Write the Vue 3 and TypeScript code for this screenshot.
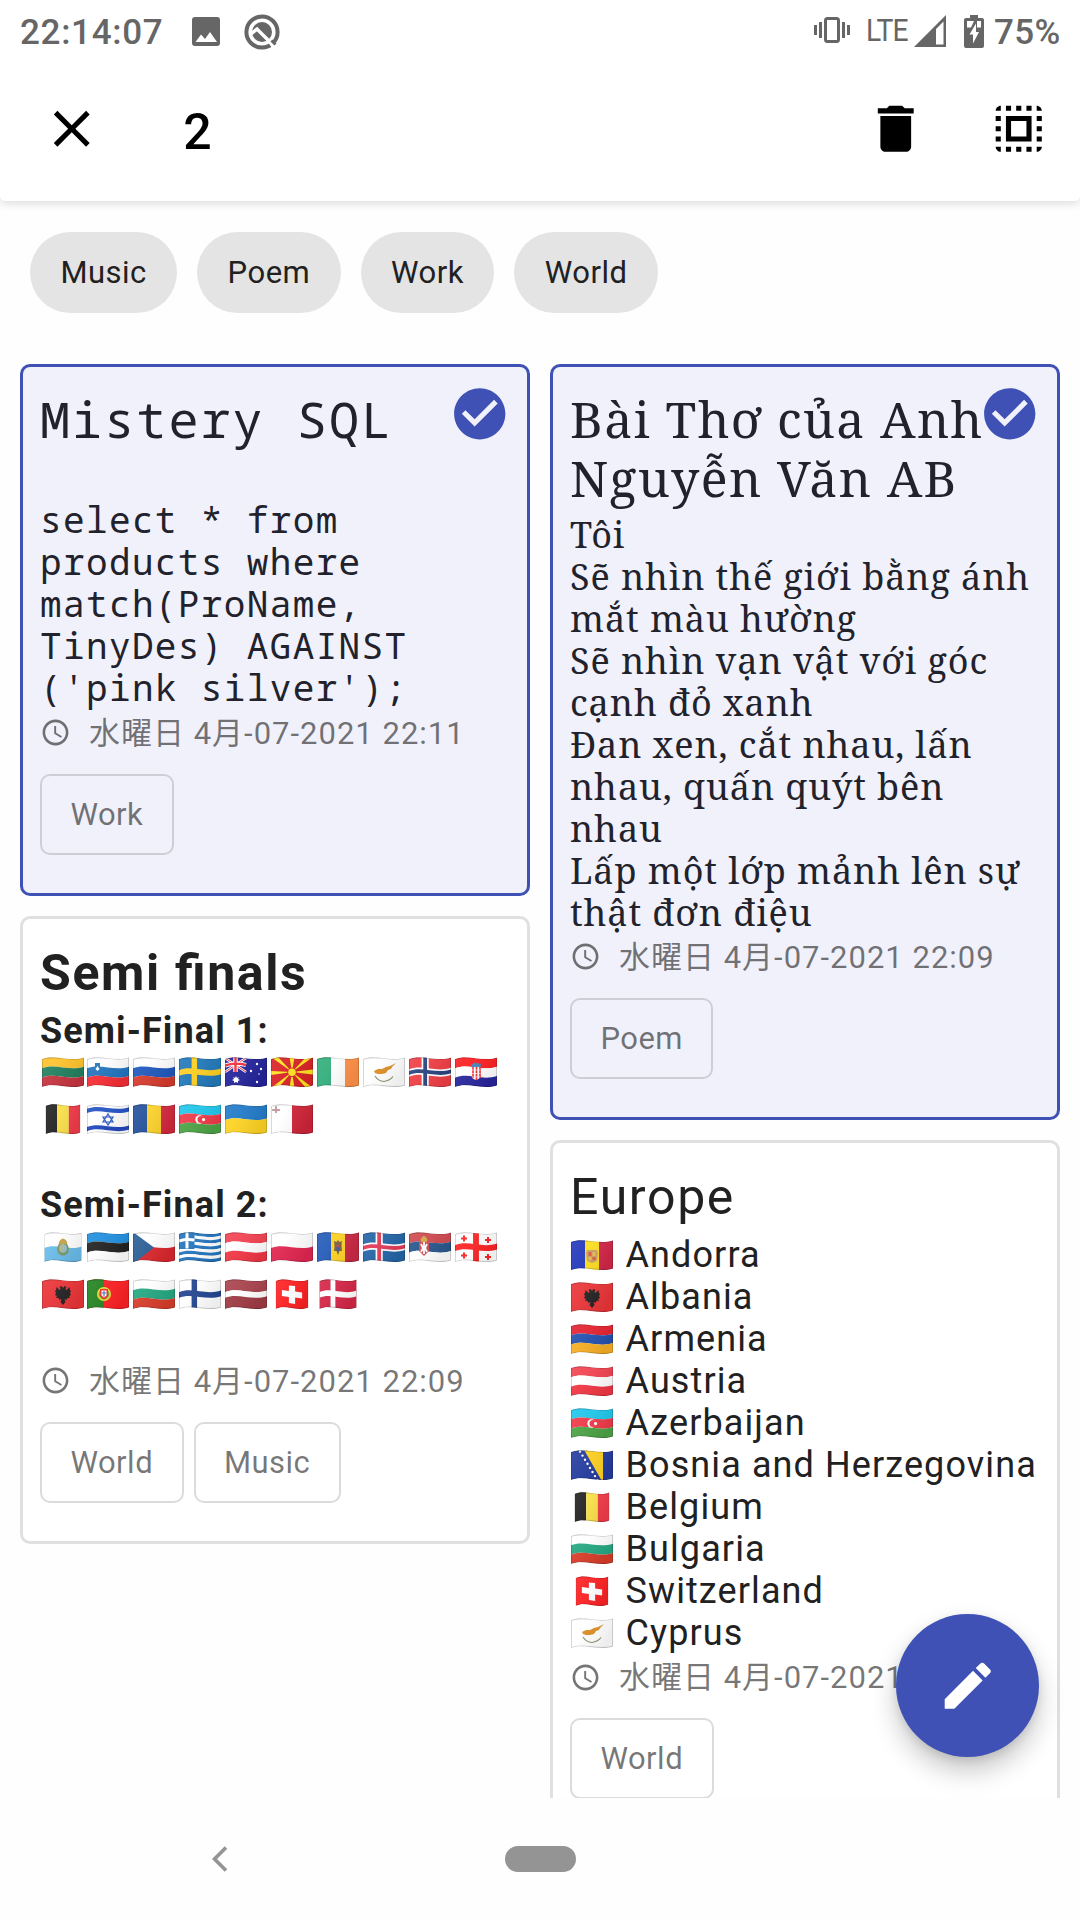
<script setup lang="ts">
interface Shape {
  d: string
  fill?: string
  stroke?: string
  width?: number
}
interface Flag {
  scale?: number
  shapes: Shape[]
}

const W = 42
const H = 28

const fwd = (y: number) => `M0 ${y + 2} C13 ${y - 3.5} 27 ${y + 5.5} ${W} ${y + 0.4}`
const back = (y: number) => `L${W} ${y + 0.4} C27 ${y + 5.5} 13 ${y - 3.5} 0 ${y + 2}Z`

/* horizontal stripe following the wave, given as fractions of the height */
const band = (a: number, b: number, fill: string): Shape => ({ d: fwd(a * H) + back(b * H), fill })
/* vertical stripe, given as fractions of the width */
const pole = (a: number, b: number, fill: string): Shape => ({ d: `M${a * W} -3H${b * W}V36H${a * W}Z`, fill })
const shape = (d: string, fill: string): Shape => ({ d, fill })
const line = (d: string, stroke: string, width: number): Shape => ({ d, stroke, width })
const disc = (x: number, y: number, r: number, fill: string): Shape =>
  shape(`M${x - r} ${y}a${r} ${r} 0 1 0 ${2 * r} 0a${r} ${r} 0 1 0 ${-2 * r} 0Z`, fill)

const rows = (...c: string[]): Shape[] => c.map((f, i) => band(i / c.length, (i + 1) / c.length, f))
const cols = (...c: string[]): Shape[] => c.map((f, i) => pole(i / c.length, (i + 1) / c.length, f))
const nordic = (bg: string, outer: string, inner?: string): Shape[] => {
  const s = [band(0, 1, bg), pole(0.3, inner ? 0.47 : 0.43, outer), band(inner ? 0.37 : 0.4, inner ? 0.63 : 0.6, outer)]
  if (inner) s.push(pole(0.34, 0.43, inner), band(0.43, 0.57, inner))
  return s
}

const outline = fwd(0) + back(H)
const eagle = 'M21 9l1.500-2 2 1-1 2 1 1 3-3 .500 3 1 1-1 2 1 2-2 1 1 2-2.500 0-1 2-2-1 1 3-2.500 3-2.500-3 1-3-2 1-1-2-2.500 0 1-2-2-1 1-2-1-2 1-1 .500-3 3 3 1-1-1-2 2-1Z'

const flags: Record<string, Flag> = {
  lt: { shapes: rows('#fec22d', '#23805f', '#c5343f') },
  si: { shapes: [...rows('#ffffff', '#2374bd', '#f52d35'), shape('M8 6h5v5q0 3-2.500 4q-2.500-1-2.500-4Z', '#2775b6'), shape('M8.500 12l2-3 2 3-2 2Z', '#ffffff')] },
  ru: { shapes: rows('#ffffff', '#2058bd', '#d53b2d') },
  se: { shapes: nordic('#2279b9', '#fecf23') },
  au: {
    shapes: [
      band(0, 1, '#25249b'),
      line('M0 1L21 15M0 15L21 1', '#ffffff', 2.6),
      line('M0 1L21 15M0 15L21 1', '#ee2d3b', 1),
      line('M0 8.500Q10 5 21 8M10.500 0V15', '#ffffff', 4.4),
      line('M0 8.500Q10 5 21 8M10.500 0V15', '#ee2d3b', 2.4),
      shape('M11 19l1 2 2-1-1 2 2 1-2 1 0 2-2-1-2 1 0-2-2-1 2-1-1-2 2 1Z', '#ffffff'),
      disc(32, 7, 1.2, '#ffffff'), disc(26, 14, 1.2, '#ffffff'), disc(36, 12, 1.2, '#ffffff'), disc(32, 25, 1.2, '#ffffff'), disc(34, 17, 0.8, '#ffffff')
    ]
  },
  mk: {
    shapes: [
      band(0, 1, '#d92327'),
      shape('M21 15L0 0h7ZM21 15L42 0h-7ZM21 15L0 31h7ZM21 15L42 31h-7ZM21 15L18.500 0h5ZM21 15L18.500 31h5ZM21 15L0 14v4ZM21 15L42 12.500v5Z', '#fee523'),
      disc(21, 15.3, 4.6, '#d92327'), disc(21, 15.3, 3.8, '#fee523')
    ]
  },
  ie: { shapes: cols('#32ae7b', '#ffffff', '#ff9148') },
  cy: {
    shapes: [
      band(0, 1, '#ffffff'),
      shape('M11 14l4-2 4 0 4-2 4-1 6-3-4 4-1 2-3 1-2 3-4 1-4 0-3-1Z', '#dc8e24'),
      line('M12 19q3 5 9 5.500q6-1 9-5', '#8c9370', 1.2)
    ]
  },
  no: { shapes: nordic('#ef3f45', '#ffffff', '#2a437f') },
  hr: {
    shapes: [
      ...rows('#fc2023', '#ffffff', '#28259c'),
      shape('M16.500 10h9v8q0 4-4.500 5q-4.500-1-4.500-5Z', '#ffffff'),
      line('M18 10v11M21.500 10v13M25 10v11', '#f43238', 1.7),
      line('M16.500 13h9M16.500 16.500h9M17 20h8', '#ffffff', 0.6),
      shape('M16 6.500l2 1 1-2 2 1 2-1 1 2 2-1-.500 3.500h-9Z', '#4187bd')
    ]
  },
  be: { scale: 0.83, shapes: cols('#232323', '#fae04a', '#f13c49') },
  il: {
    shapes: [
      band(0, 1, '#ffffff'), band(0.1, 0.25, '#2453c3'), band(0.75, 0.9, '#2247be'),
      line('M21 10L26 18H16ZM21 21L16 13H26Z', '#2858c4', 1.2)
    ]
  },
  ro: { shapes: cols('#25519c', '#fcd22d', '#d3293d') },
  az: {
    shapes: [...rows('#20c6ea', '#ef3a49', '#4da246'), disc(20.5, 15.5, 4.2, '#ffffff'), disc(22, 15.5, 3.5, '#ef3a49'), disc(24.6, 15.6, 1.7, '#ffffff')]
  },
  ua: { shapes: rows('#227bc8', '#fed324') },
  mt: { shapes: [band(0, 1, '#ffffff'), pole(0.5, 1, '#ce2438'), line('M5 2v7M1 6h8', '#b5a3a7', 2), line('M5 3v5M2 6h6', '#d5808a', 0.7)] },
  sm: {
    scale: 0.89,
    shapes: [
      ...rows('#ffffff', '#69bbe8'),
      disc(21, 17, 6.6, '#7c9860'), disc(21, 16.5, 4.6, '#7fb6cf'),
      shape('M17 9q4-5 8 0l1 3H16Z', '#c8a448'),
      line('M18.500 13v6M21 12v8M23.500 13v6', '#d8c27a', 1)
    ]
  },
  ee: { shapes: rows('#218fde', '#222222', '#ffffff') },
  cz: { shapes: [...rows('#ffffff', '#d9272d'), shape('M0 0L21 15.500 0 32Z', '#2c5f96')] },
  gr: {
    shapes: [
      ...Array.from({ length: 9 }, (_, i) => band(i / 9, (i + 1) / 9, i % 2 ? '#ffffff' : '#2475bd')),
      shape('M0 0H15.500V17H0Z', '#2475bd'),
      line('M0 9Q8 6.500 15.500 8M8 0V16.500', '#ffffff', 3)
    ]
  },
  at: { shapes: rows('#f24351', '#ffffff', '#f03644') },
  pl: { shapes: rows('#ffffff', '#e02650') },
  md: {
    shapes: [...cols('#245cb8', '#fdd226', '#cc2945'), shape('M21 8l1.500 2 2.500-1-.500 5 .500 5-2.500 0-1.500 4-1.500-4-2.500 0 .500-5-.500-5 2.500 1Z', '#7c6541'), shape('M19.500 13h3v5l-1.500 2-1.500-2Z', '#425ba6'), shape('M19.500 13h3v2h-3Z', '#d94337')]
  },
  is: { shapes: nordic('#2465a6', '#ffffff', '#e33a58') },
  rs: {
    shapes: [
      ...rows('#cf4b51', '#2a568d', '#ffffff'),
      shape('M10 10l5-2 5 2v9l-5 5-5-5Z', '#ce4b50'),
      line('M15 10v12M12 12l2 4-2 4M18 12l-2 4 2 4', '#ffffff', 1.8),
      shape('M11.500 8q3.500-8 7 0l-1 2h-5Z', '#d2a845')
    ]
  },
  ge: {
    shapes: [
      band(0, 1, '#ffffff'), band(0.4, 0.61, '#fb2425'), pole(0.43, 0.57, '#fb2425'),
      line('M9 3.500v6M6 6.500h6M33 5v6M30 8h6M9 20.500v6M6 23.500h6M33 22v6M30 25h6', '#fb2425', 2)
    ]
  },
  al: { shapes: [band(0, 1, '#e93438'), shape(eagle, '#222222')] },
  pt: {
    shapes: [
      band(0, 1, '#fc2023'), pole(0, 0.4, '#238320'), disc(17, 15, 7, '#e8df38'), disc(17, 15, 5.4, '#8b9a2e'),
      shape('M13 10h8v7l-4 3.500-4-3.500Z', '#ef2e2c'), shape('M14.500 11.500h5v5l-2.500 2-2.500-2Z', '#ffffff'), line('M17 12v5.500M15 14h4', '#3d6abc', 1.1)
    ]
  },
  bg: { shapes: rows('#ffffff', '#25a781', '#d73c29') },
  fi: { shapes: nordic('#ffffff', '#23468f') },
  lv: { shapes: [band(0, 0.4, '#a8434d'), band(0.4, 0.6, '#ffffff'), band(0.6, 1, '#9e3a43')] },
  ch: { scale: 0.78, shapes: [band(0, 1, '#fd2123'), shape('M17 6.500l8 .500v5.500l9 1v6l-9-1v6.500l-8-1v-6l-9-1v-6l9 1Z', '#ffffff')] },
  dk: { scale: 0.89, shapes: nordic('#d32646', '#ffffff') },
  ad: {
    shapes: [...cols('#2439bc', '#fedf22', '#d32748'), shape('M16 10h10l1 3-1 8-5 2-5-2-1-8Z', '#c8a26b'), shape('M17.500 12h3v4h-3ZM21.500 17h3v3h-3Z', '#e35b35'), shape('M21.500 12h3v4h-3ZM17.500 17h3v3h-3Z', '#f1b94b')]
  },
  am: { shapes: rows('#e42230', '#2451ae', '#f6ae24') },
  ba: {
    shapes: [band(0, 1, '#243c9e'), shape('M12 -2H32V33Z', '#fdd023'), ...Array.from({ length: 8 }, (_, i) => disc(9 + i * 2.5, 1.5 + i * 4.1, 1.2, '#ffffff'))]
  }
}

type Tone = 'sans' | 'mono' | 'serif' | 'bold'
interface Block {
  kind: 'text' | 'flags' | 'country' | 'gap'
  text?: string
  codes?: string[]
  code?: string
}
interface Note {
  title: string[]
  tone: Tone
  selected: boolean
  date: string
  tags: string[]
  blocks: Block[]
}

const text = (t: string): Block => ({ kind: 'text', text: t })
const strip = (s: string): Block => ({ kind: 'flags', codes: s.split(' ') })
const country = (code: string, t: string): Block => ({ kind: 'country', code, text: t })

const columns: Note[][] = [
  [
    {
      title: ['Mistery SQL'], tone: 'mono', selected: true, date: '22:11', tags: ['Work'],
      blocks: ['select * from', 'products where', 'match(ProName,', 'TinyDes) AGAINST', "('pink silver');"].map(text)
    },
    {
      title: ['Semi finals'], tone: 'bold', selected: false, date: '22:09', tags: ['World', 'Music'],
      blocks: [
        text('Semi-Final 1:'),
        strip('lt si ru se au mk ie cy no hr'),
        strip('be il ro az ua mt'),
        { kind: 'gap' },
        text('Semi-Final 2:'),
        strip('sm ee cz gr at pl md is rs ge'),
        strip('al pt bg fi lv ch dk'),
        { kind: 'gap' }
      ]
    }
  ],
  [
    {
      title: ['Bài Thơ của Anh', 'Nguyễn Văn AB'], tone: 'serif', selected: true, date: '22:09', tags: ['Poem'],
      blocks: ['Tôi', 'Sẽ nhìn thế giới bằng ánh', 'mắt màu hường', 'Sẽ nhìn vạn vật với góc', 'cạnh đỏ xanh', 'Đan xen, cắt nhau, lấn', 'nhau, quấn quýt bên', 'nhau', 'Lấp một lớp mảnh lên sự', 'thật đơn điệu'].map(text)
    },
    {
      title: ['Europe'], tone: 'sans', selected: false, date: '22:09', tags: ['World'],
      blocks: [
        country('ad', 'Andorra'), country('al', 'Albania'), country('am', 'Armenia'), country('at', 'Austria'), country('az', 'Azerbaijan'),
        country('ba', 'Bosnia and Herzegovina'), country('be', 'Belgium'), country('bg', 'Bulgaria'), country('ch', 'Switzerland'), country('cy', 'Cyprus')
      ]
    }
  ]
]

const filters = ['Music', 'Poem', 'Work', 'World']

const fit = (f: Flag) => (f.scale ? `translate(${(W * (1 - f.scale)) / 2} 0) scale(${f.scale} 1)` : undefined)
const codesOf = (b: Block) => b.codes ?? (b.code ? [b.code] : [])
</script>

<template>
  <div class="screen">
    <svg class="defs" aria-hidden="true">
      <defs>
        <clipPath id="wave"><path :d="outline" /></clipPath>
        <linearGradient id="shade" x1="0" y1="0" x2="1" y2="0.4">
          <stop offset="0" stop-color="#fff" stop-opacity="0.1" />
          <stop offset="0.35" stop-color="#fff" stop-opacity="0.06" />
          <stop offset="1" stop-color="#000" stop-opacity="0.07" />
        </linearGradient>
      </defs>
    </svg>

    <header class="top">
      <div class="status">
        <span class="clock">22:14:07</span>
        <svg class="s-image" viewBox="0 0 28 29"><path fill-rule="evenodd" d="M3 0h22a3 3 0 0 1 3 3v23a3 3 0 0 1-3 3H3a3 3 0 0 1-3-3V3a3 3 0 0 1 3-3ZM3.500 25h21.500l-7-10-5 7-4-4.500Z" /></svg>
        <svg class="s-q" viewBox="0 0 36 36">
          <circle cx="18" cy="18" r="15.600" fill="none" stroke="currentColor" stroke-width="4" />
          <circle cx="18" cy="18" r="10" />
          <path d="M7 20L13 15 30 32" fill="none" stroke="#fff" stroke-width="3.400" />
          <path d="M26 31l5-3 4 5-5 3Z" fill="#fff" />
          <path d="M27.500 26.500l4 4" stroke="currentColor" stroke-width="3" />
          <path d="M25 28l5 6" stroke="#fff" stroke-width="2" />
        </svg>
        <span class="grow"></span>
        <svg class="s-vib" viewBox="0 0 36 26"><path d="M0 8h3v10H0ZM5 5h3v16H5ZM28 5h3v16h-3ZM33 8h3v10h-3Z" /><rect x="11.500" y="1.500" width="13" height="23" rx="2" fill="none" stroke="currentColor" stroke-width="3" /></svg>
        <span class="lte">LTE</span>
        <svg class="s-sig" viewBox="0 0 32 32"><path fill-rule="evenodd" d="M32 0V32H0ZM29.500 6.500L22 14V29.500h7.500Z" /></svg>
        <svg class="s-bat" viewBox="0 0 20 33"><path fill-rule="evenodd" d="M6 0h8v3h4a2 2 0 0 1 2 2v26a2 2 0 0 1-2 2H2a2 2 0 0 1-2-2V5a2 2 0 0 1 2-2h4ZM3 6v6.500h4l3-6.500ZM13 6v6.500h4V6ZM12 8.500L5.500 19.500H9v9L15 17h-3Z" /></svg>
        <span class="pct">75%</span>
      </div>
      <div class="toolbar">
        <svg class="ico" viewBox="0 0 24 24"><path d="M19 6.410L17.590 5 12 10.590 6.410 5 5 6.410 10.590 12 5 17.590 6.410 19 12 13.410 17.590 19 19 17.590 13.410 12z" /></svg>
        <span class="count">2</span>
        <span class="grow"></span>
        <svg class="ico" viewBox="0 0 24 24"><path d="M6 19c0 1.100.9 2 2 2h8c1.100 0 2-.9 2-2V7H6v12zM19 4h-3.500l-1-1h-5l-1 1H5v2h14V4z" /></svg>
        <svg class="ico all" viewBox="0 0 24 24"><path d="M3 5h2V3c-1.100 0-2 .9-2 2zm0 8h2v-2H3v2zm4 8h2v-2H7v2zM3 9h2V7H3v2zm10-6h-2v2h2V3zm6 0v2h2c0-1.100-.9-2-2-2zM5 21v-2H3c0 1.100.9 2 2 2zm-2-4h2v-2H3v2zM9 3H7v2h2V3zm2 18h2v-2h-2v2zm8-8h2v-2h-2v2zm0 8c1.100 0 2-.9 2-2h-2v2zm0-12h2V7h-2v2zm0 8h2v-2h-2v2zm-4 4h2v-2h-2v2zm0-16h2V3h-2v2zM7 17h10V7H7v10zm2-8h6v6H9V9z" /></svg>
      </div>
    </header>

    <main class="content">
      <div class="filters">
        <span v-for="f in filters" :key="f" class="filter">{{ f }}</span>
      </div>
      <div class="board">
        <div v-for="(col, ci) in columns" :key="ci" class="col">
          <article v-for="note in col" :key="note.title[0]" class="card" :class="[note.tone, { selected: note.selected }]">
            <svg v-if="note.selected" class="check" viewBox="0 0 24 24"><path d="M12 2C6.480 2 2 6.480 2 12s4.480 10 10 10 10-4.480 10-10S17.520 2 12 2zm-2 15l-5-5 1.410-1.410L10 14.170l7.590-7.590L19 8l-9 9z" /></svg>
            <h2 class="title"><span v-for="t in note.title" :key="t">{{ t }}</span></h2>
            <div class="body">
              <div v-for="(b, bi) in note.blocks" :key="bi" class="row" :class="b.kind">
                <svg v-for="c in codesOf(b)" :key="c" class="flag" viewBox="0 0 42 31">
                  <g :transform="fit(flags[c])">
                    <g clip-path="url(#wave)">
                      <path v-for="(s, si) in flags[c].shapes" :key="si" :d="s.d" :fill="s.fill ?? 'none'" :stroke="s.stroke" :stroke-width="s.width" />
                      <path :d="outline" fill="url(#shade)" stroke="#000" stroke-opacity="0.2" stroke-width="1.600" />
                    </g>
                  </g>
                </svg>
                <span v-if="b.text">{{ b.text }}</span>
              </div>
            </div>
            <div class="date">
              <svg viewBox="0 0 24 24"><path d="M11.990 2C6.470 2 2 6.480 2 12s4.470 10 9.990 10C17.520 22 22 17.520 22 12S17.520 2 11.990 2zM12 20c-4.420 0-8-3.580-8-8s3.580-8 8-8 8 3.580 8 8-3.580 8-8 8zm.5-13H11v6l5.250 3.150.75-1.230-4.500-2.670z" /></svg>
              <span>水曜日 4月-07-2021 {{ note.date }}</span>
            </div>
            <div class="tags"><span v-for="t in note.tags" :key="t" class="tag">{{ t }}</span></div>
          </article>
        </div>
      </div>
    </main>

    <div class="fab">
      <svg class="ico" viewBox="0 0 24 24"><path d="M3 17.250V21h3.750L17.810 9.940l-3.750-3.750L3 17.250zM20.710 7.040c.39-.39.39-1.020 0-1.410l-2.340-2.340c-.39-.39-1.020-.39-1.410 0l-1.830 1.830 3.750 3.750 1.830-1.830z" /></svg>
    </div>

    <footer class="nav">
      <svg class="backbtn" viewBox="0 0 16 26"><path d="M14 1.500L2.500 13 14 24.500" fill="none" stroke="#949494" stroke-width="3.600" /></svg>
      <span class="pill"></span>
    </footer>
  </div>
</template>

<style>
body {
  margin: 0;
  background: #fff;
}
</style>

<style scoped>
.screen {
  position: relative;
  width: 1080px;
  height: 1920px;
  overflow: hidden;
  display: flex;
  flex-direction: column;
  background: #fefefe;
  color: #212121;
  font-family: Roboto, "Noto Sans CJK JP", sans-serif;
  font-size: 36px;
}
svg {
  display: block;
  flex: none;
  fill: currentColor;
}
.defs {
  position: absolute;
  width: 0;
  height: 0;
}
.grow {
  flex: 1;
}
.top {
  height: 201px;
  flex: none;
  background: #fff;
  border-radius: 0 0 5px 5px;
  box-shadow: 0 3px 9px rgba(0, 0, 0, 0.13);
  z-index: 1;
}
.status {
  box-sizing: border-box;
  height: 63px;
  padding: 0 20px;
  display: flex;
  align-items: center;
  color: #666;
  font-size: 35px;
  font-weight: 470;
}
.clock {
  width: 172px;
  flex: none;
  letter-spacing: 0.7px;
  line-height: 40px;
  padding-top: 3px;
}
.s-image {
  width: 28px;
  height: 29px;
}
.s-q {
  width: 36px;
  height: 36px;
  margin-left: 24px;
}
.s-vib {
  width: 36px;
  height: 26px;
  margin: 0 16px 3px 0;
}
.lte {
  flex: none;
  font-size: 31px;
  font-weight: 400;
  width: 48px;
  letter-spacing: -1px;
  margin-bottom: 2px;
  transform: scaleX(0.91);
  transform-origin: left;
}
.s-sig {
  width: 32px;
  height: 32px;
  margin-bottom: 2px;
}
.s-bat {
  width: 20px;
  height: 33px;
  margin: 0 10px 1px 18px;
}
.pct {
  width: 66px;
  line-height: 40px;
  padding-top: 3px;
  letter-spacing: 0.3px;
}
.toolbar {
  box-sizing: border-box;
  height: 138px;
  padding: 0 31px 7px 41px;
  display: flex;
  align-items: center;
  color: #000;
}
.ico {
  width: 61.500px;
  height: 61.500px;
}
.all {
  margin-left: 61.500px;
}
.count {
  margin: 6px 0 0 80.700px;
  font-size: 50px;
  font-weight: 500;
}
.content {
  height: 1597px;
  flex: none;
  overflow: hidden;
}
.filters {
  display: flex;
  gap: 20px;
  padding: 31px 30px 0;
}
.filter,
.tag {
  box-sizing: border-box;
  height: 81px;
  font-size: 31px;
  letter-spacing: 0.5px;
}
.filter {
  padding: 0 30.400px;
  line-height: 82px;
  border-radius: 41px;
  background: #e4e4e4;
}
.board {
  display: flex;
  gap: 20px;
  padding: 51px 20px 0;
}
.col {
  width: 510px;
  display: flex;
  flex-direction: column;
  gap: 20px;
}
.card {
  position: relative;
  box-sizing: border-box;
  border: 3px solid #e0e0e0;
  border-radius: 10px;
  padding: 25px 0 38px 17px;
  background: #fff;
}
.card.selected {
  border-color: #3f51b5;
  background: #f0f1fa;
  color: #22222c;
}
.check {
  position: absolute;
  top: 16px;
  right: 17px;
  width: 61.500px;
  height: 61.500px;
  color: #3f51b5;
}
.title {
  margin: 0;
  font-size: 50px;
  font-weight: 400;
  line-height: 59px;
  letter-spacing: 1.650px;
}
.title span {
  display: block;
}
.body {
  padding-top: 6.900px;
  letter-spacing: 1.100px;
}
.row {
  display: flex;
  height: 42.060px;
  line-height: 42px;
  white-space: pre;
}
.row.gap {
  height: 38px;
}
.flag {
  width: 42px;
  height: 31px;
}
.row.flags {
  height: 47px;
  gap: 3.900px;
  padding-left: 1.500px;
}
.row.flags .flag {
  margin-top: 5.500px;
}
.row.country .flag {
  margin: 6px 12.500px 0 1px;
}
.card.mono {
  padding-top: 22.500px;
}
.mono .title,
.mono .body {
  font-family: "Noto Sans Mono", "Droid Sans Mono", "DejaVu Sans Mono", monospace;
}
.mono .title {
  letter-spacing: 2.100px;
}
.mono .body {
  padding: 50.300px 0 1px;
  letter-spacing: 1.370px;
}
.card.serif {
  padding-top: 22.500px;
}
.serif .title,
.serif .body {
  font-family: "Noto Serif", "Droid Serif", "DejaVu Serif", serif;
  font-stretch: condensed;
}
.serif .title {
  letter-spacing: 1.430px;
}
.serif .body {
  padding-top: 6px;
  letter-spacing: 0.900px;
}
.bold .title,
.bold .body {
  font-weight: 700;
  font-feature-settings: "liga" 1;
}
.date {
  display: flex;
  align-items: center;
  height: 44px;
  margin-top: 1.700px;
  font-size: 31px;
  letter-spacing: 1px;
  color: rgba(0, 0, 0, 0.54);
  line-height: 44px;
  white-space: pre;
}
.date svg {
  width: 31px;
  height: 31px;
  margin: 0 18px 2px 0;
}
.tags {
  display: flex;
  gap: 10px;
  padding-top: 18.300px;
}
.tag {
  border: 2px solid rgba(0, 0, 0, 0.14);
  border-radius: 10px;
  padding: 0 28.400px;
  line-height: 77px;
  color: rgba(0, 0, 0, 0.54);
}
.fab {
  position: absolute;
  left: 896px;
  top: 1614px;
  width: 143px;
  height: 143px;
  border-radius: 50%;
  background: #3f51b5;
  color: #fff;
  display: flex;
  align-items: center;
  justify-content: center;
  box-shadow: 0 14px 26px rgba(0, 0, 0, 0.22), 0 3px 8px rgba(0, 0, 0, 0.1);
  z-index: 2;
}
.nav {
  height: 122px;
  display: flex;
  align-items: center;
  background: #fefefe;
}
.backbtn {
  width: 16px;
  height: 26px;
  margin: 0 277px 0 212px;
}
.pill {
  width: 71px;
  height: 26px;
  border-radius: 13px;
  background: #949494;
}
</style>
